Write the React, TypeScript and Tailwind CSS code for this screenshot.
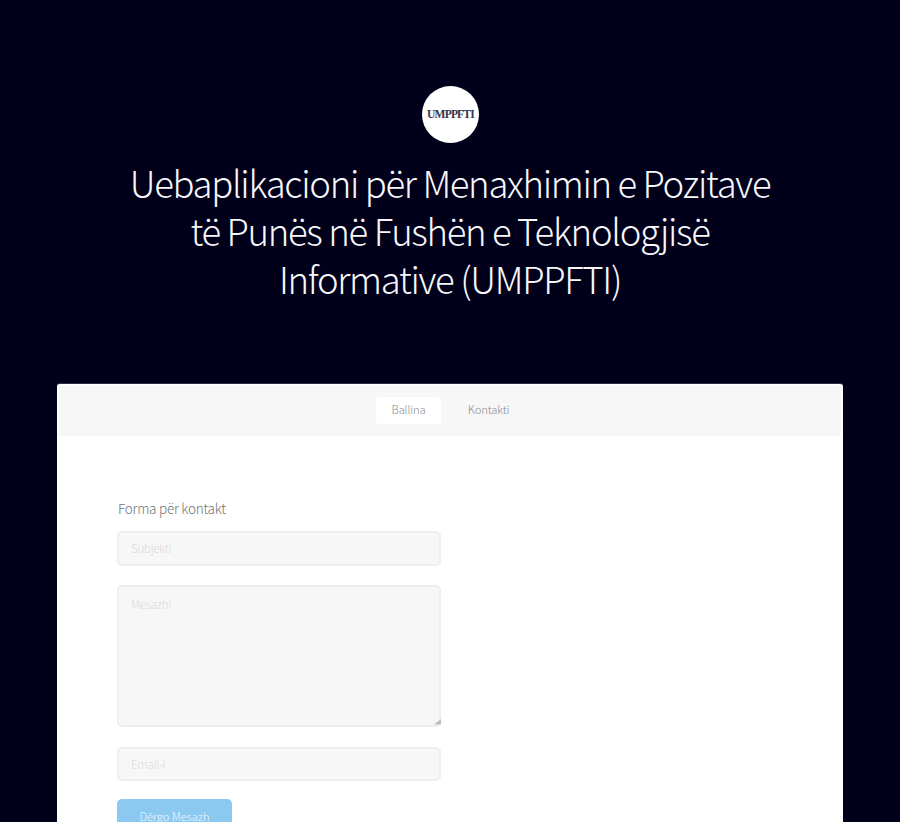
import React from "react";

const titleLines = [
  "Uebaplikacioni për Menaxhimin e Pozitave",
  "të Punës në Fushën e Teknologjisë",
  "Informative (UMPPFTI)",
];

const field =
  "block w-[324px] resize-none rounded-[5px] border-2 border-[#eeeeee] bg-[#f7f7f7] px-3 text-[11.6px] tracking-[-0.3px] text-[#636363] outline-none placeholder:text-[#dadada]";

export default function App() {
  return (
    <div className="flex h-[822px] flex-col items-center overflow-hidden bg-[#00001a] font-['Noto_Sans_CJK_SC',sans-serif] font-light">
      <header className="flex h-[383px] w-full shrink-0 flex-col items-center pt-[86px]">
        <div className="ml-px flex size-[57px] items-center justify-center rounded-full bg-white font-['Liberation_Serif',serif] text-[11.5px] font-bold tracking-[-0.8px] text-[#33334a]">
          UMPPFTI
        </div>
        <h1 className="mt-[16px] text-center text-[36.5px] leading-[48px] tracking-[-1.32px] text-[#f7f7fa]">
          {titleLines.map((line) => (
            <span key={line} className="block whitespace-nowrap">
              {line}
            </span>
          ))}
        </h1>
      </header>
      <main className="w-[786px] flex-1 rounded-t-[3px] border-t border-[#2b2b3e] bg-white pt-[2px]">
        <nav className="mx-[2px] flex h-[50px] items-center justify-center bg-[#f7f7f7] pb-[2px] text-[11.3px] tracking-[-0.2px] text-[#8c8c8c]">
          <a className="flex h-[27px] w-[65px] items-center justify-center rounded-[4px] bg-white pb-[2px]">Ballina</a>
          <a className="ml-[12px] flex h-[27px] w-[71px] items-center justify-center pb-[2px]">Kontakti</a>
        </nav>
        <form className="flex flex-col items-start pt-[62px] pl-[60px]">
          <h2 className="pl-px text-[13.5px] leading-[20px] tracking-[-0.24px] text-[#737373]">Forma për kontakt</h2>
          <input className={`${field} mt-[13px] h-[35px] pb-px`} placeholder="Subjekti" />
          <div className="relative mt-[19px]">
            <textarea className={`${field} h-[142px] pt-[9px]`} placeholder="Mesazhi" />
            <svg className="absolute right-0 bottom-[2px] size-[7px] text-[#bdbdbd]" viewBox="0 0 7 7">
              <path d="M0 6.5 7 1v5.5z" fill="currentColor" />
            </svg>
          </div>
          <input className={`${field} mt-[20px] h-[34px] pb-px`} placeholder="Email-i" />
          <button type="button" className="mt-[18px] h-[34px] w-[115px] rounded-[5px] bg-[#8cc9f0] pb-px text-[11.2px] leading-[14px] text-[#eef8ff]">
            Dërgo Mesazh
          </button>
        </form>
      </main>
    </div>
  );
}
